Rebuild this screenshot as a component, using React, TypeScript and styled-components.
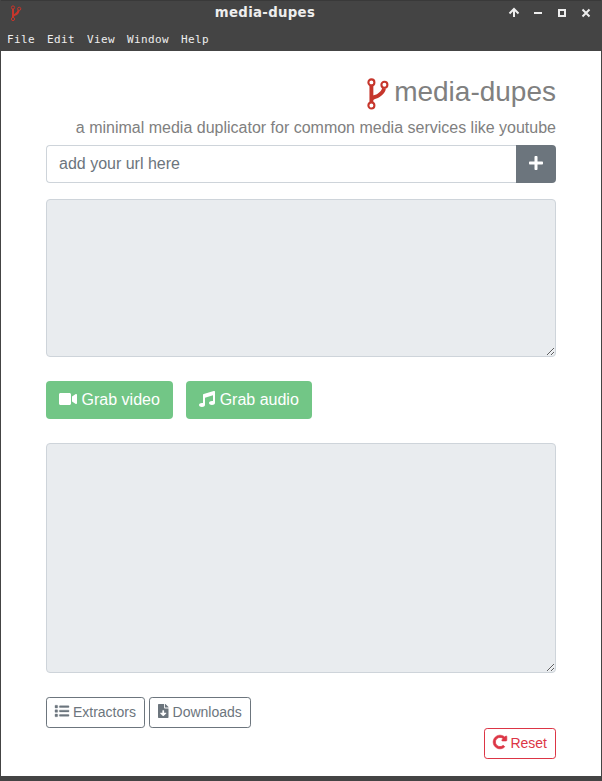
import React from "react";
import styled, { createGlobalStyle } from "styled-components";
import { FaVideo, FaMusic, FaPlus, FaList, FaFileDownload, FaRedoAlt } from "react-icons/fa";

const GlobalStyle = createGlobalStyle`
  *, *::before, *::after { box-sizing: border-box; }
  body { margin: 0; background: #fff; }
`;

const Window = styled.div`
  display: flex;
  flex-direction: column;
  width: 602px;
  height: 781px;
  border: solid #444;
  border-width: 0 1px 5px;
  background: #fff;
  color: #212529;
  font: 16px/24px "Liberation Sans", Arial, sans-serif;
`;

const TitleBar = styled.header`
  display: grid;
  grid-template-columns: 100px 1fr 100px;
  align-items: center;
  height: 27px;
  flex: none;
  background: #444;
  border-top: 1px solid #393939;
  padding: 0 10px 2px 9px;
`;

const WindowTitle = styled.div`
  padding-right: 71px;
  text-align: center;
  color: #eee;
  font: bold 13.3px/20px "DejaVu Sans", sans-serif;
  letter-spacing: 0.32px;
  white-space: nowrap;
`;

const WindowControls = styled.svg`
  display: block;
  width: 84px;
  height: 11px;
  margin-bottom: 1px;
  justify-self: end;
`;

const MenuBar = styled.nav`
  display: flex;
  gap: 12px;
  height: 24px;
  flex: none;
  padding: 0 6px;
  background: #444;
  color: #eee;
  font: 11px/25px "DejaVu Sans Mono", monospace;
`;

const MenuItem = styled.span<{ $w: number }>`
  width: ${(p) => p.$w}px;
  letter-spacing: 0.38px;
`;

const Content = styled.main`
  display: flex;
  flex-direction: column;
  padding: 24px 45px 0;
`;

const Brand = styled.h1`
  display: flex;
  justify-content: flex-end;
  align-items: center;
  gap: 5px;
  height: 34px;
  margin: 0 0 7px;
  color: gray;
  font-size: 28px;
  font-weight: 400;
  line-height: 34px;
`;

const BrandMark = styled.span`
  display: flex;
  padding-top: 3px;
`;

const Tagline = styled.p`
  margin: 0 0 5px;
  height: 24px;
  text-align: right;
  color: gray;
  white-space: nowrap;
`;

const InputGroup = styled.div`
  display: flex;
  height: 38px;
  margin-bottom: 16px;
`;

const UrlInput = styled.input`
  flex: 1;
  min-width: 0;
  height: 38px;
  padding: 6px 12px;
  border: 1px solid #ced4da;
  border-right: 0;
  border-radius: 4px 0 0 4px;
  outline: 0;
  background: #fff;
  font: inherit;
  &::placeholder { color: #6c757d; opacity: 1; }
`;

const AddButton = styled.button`
  display: flex;
  align-items: center;
  justify-content: center;
  width: 40px;
  padding: 0 0 2px;
  border: 0;
  border-radius: 0 4px 4px 0;
  background: #6c757d;
  color: #fff;
  font-size: 16px;
`;

const TextBox = styled.textarea<{ $height: number }>`
  display: block;
  width: 100%;
  height: ${(p) => p.$height}px;
  margin: 0 0 24px;
  padding: 6px 12px;
  border: 1px solid #ced4da;
  border-radius: 4px;
  background: #e9ecef;
  resize: vertical;
  font: inherit;
`;

const ActionRow = styled.div`
  display: flex;
  gap: 13px;
  margin-bottom: 24px;
`;

const ToolRow = styled.div`
  display: flex;
  gap: 4px;
`;

const ResetRow = styled.div`
  display: flex;
  justify-content: flex-end;
`;

const GrabButton = styled.button<{ $width: number; $iconShift: number }>`
  width: ${(p) => p.$width}px;
  height: 38px;
  padding: 0;
  border: 0;
  border-radius: 4px;
  background: #72c686;
  color: #fff;
  font: inherit;
  white-space: nowrap;
  svg { vertical-align: ${(p) => p.$iconShift}px; }
`;

const OutlineButton = styled.button<{ $color: string; $width: number }>`
  width: ${(p) => p.$width}px;
  height: 31px;
  padding: 0;
  border: 1px solid ${(p) => p.$color};
  border-radius: 3.2px;
  background: #fff;
  color: ${(p) => p.$color};
  font: 14px/21px "Liberation Sans", Arial, sans-serif;
  white-space: nowrap;
  svg { vertical-align: -1px; }
`;

const DownloadIcon = styled(FaFileDownload)`
  width: 10.5px;
  height: 14px;
`;

const ListIcon = styled(FaList)`
  overflow: visible;
  stroke-width: 14px;
`;

const ResetIcon = styled(FaRedoAlt)`
  margin-right: -0.5px;
  overflow: visible;
  stroke-width: 26px;
`;

const ForkLogo = () => (
  <svg width="22" height="32" viewBox="0 0 22 32" fill="none" stroke="#c6362c">
    <path d="M4.400 7v18M4.400 21.500c1-2.600 4-2.200 7.200-4.200 3.200-2 5-4 5.400-7" strokeWidth="3.900" />
    <g fill="#fff" strokeWidth="2.100">
      <circle cx="4.400" cy="4.400" r="3" />
      <circle cx="17.400" cy="6.800" r="3" />
      <circle cx="4.400" cy="27.500" r="3" />
    </g>
  </svg>
);

const TitleLogo = () => (
  <svg width="12" height="17" viewBox="0 0 12 17" fill="none" stroke="#c6362c">
    <path d="M3 4v9M3 11c1-1.500 5-1 5.700-6" strokeWidth="2" />
    <circle cx="3" cy="2.500" r="1.600" fill="#444" />
    <circle cx="9.200" cy="3.800" r="1.600" fill="#444" />
    <circle cx="3" cy="14" r="1.600" fill="#444" />
  </svg>
);

const menus: [string, number][] = [["File", 28], ["Edit", 28], ["View", 28], ["Window", 42], ["Help", 28]];

export default function App() {
  return (
    <Window>
      <GlobalStyle />
      <TitleBar>
        <TitleLogo />
        <WindowTitle>media-dupes</WindowTitle>
        <WindowControls viewBox="0 0 84 11" fill="none" stroke="#eee" strokeWidth="2">
          <path d="M7 10V3M2.500 6.500L7 2l4.500 4.500" />
          <path d="M27 6h8" />
          <path d="M52 3h6v6h-6z" />
          <path d="M75.500 2.500l7 7M82.500 2.500l-7 7" />
        </WindowControls>
      </TitleBar>
      <MenuBar>
        {menus.map(([label, w]) => <MenuItem key={label} $w={w}>{label}</MenuItem>)}
      </MenuBar>
      <Content>
        <Brand><BrandMark><ForkLogo /></BrandMark>media-dupes</Brand>
        <Tagline>a minimal media duplicator for common media services like youtube</Tagline>
        <InputGroup>
          <UrlInput placeholder="add your url here" />
          <AddButton aria-label="Add"><FaPlus /></AddButton>
        </InputGroup>
        <TextBox $height={158} readOnly />
        <ActionRow>
          <GrabButton $width={127} $iconShift={-3}><FaVideo size={18} /> Grab video</GrabButton>
          <GrabButton $width={126} $iconShift={-2}><FaMusic /> Grab audio</GrabButton>
        </ActionRow>
        <TextBox $height={230} readOnly />
        <ToolRow>
          <OutlineButton $color="#6c757d" $width={99}><ListIcon /> Extractors</OutlineButton>
          <OutlineButton $color="#6c757d" $width={102}><DownloadIcon /> Downloads</OutlineButton>
        </ToolRow>
        <ResetRow>
          <OutlineButton $color="#dc3545" $width={72}><ResetIcon /> Reset</OutlineButton>
        </ResetRow>
      </Content>
    </Window>
  );
}
